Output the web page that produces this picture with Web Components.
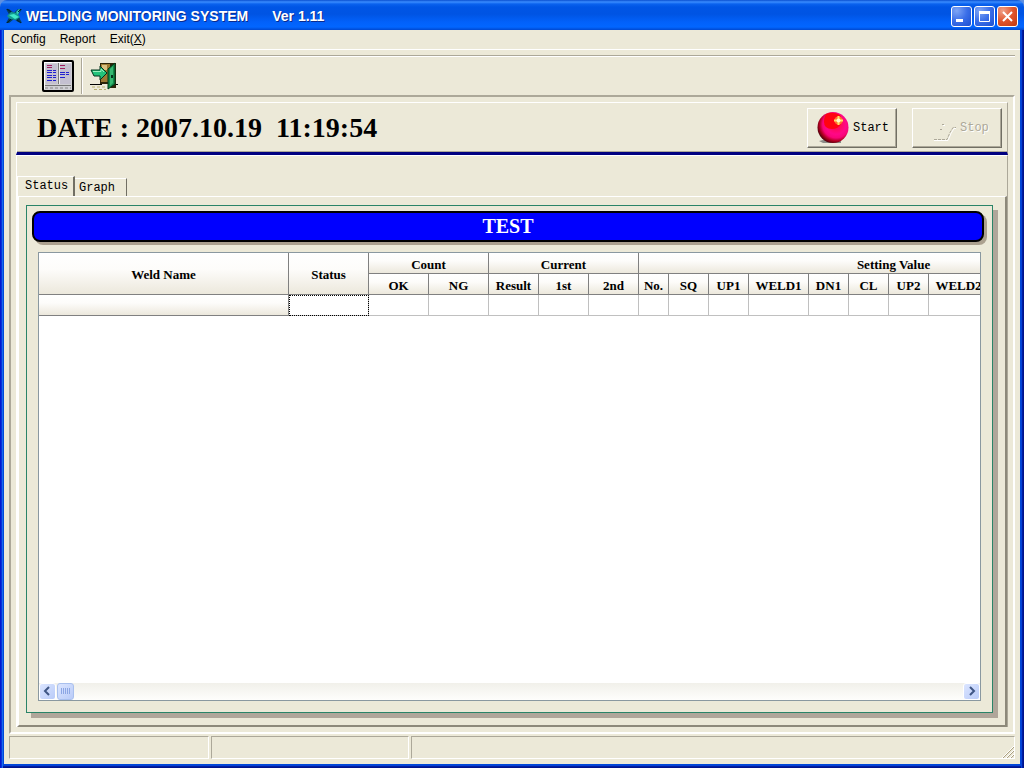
<!DOCTYPE html>
<html lang="en">
<head>
<meta charset="utf-8">
<title>WELDING MONITORING SYSTEM</title>
<style>
  body { margin: 0; background: #5f8fe0; }
</style>
</head>
<body>
<app-window>
  <title-bar slot="title">WELDING MONITORING SYSTEM<span slot="version">Ver 1.11</span></title-bar>
  <menu-bar></menu-bar>
  <tool-bar></tool-bar>
  <main-frame>
    <date-panel>
      <span>DATE : 2007.10.19&nbsp; 11:19:54</span>
      <push-button slot="actions" kind="start">Start</push-button>
      <push-button slot="actions" kind="stop" disabled>Stop</push-button>
    </date-panel>
    <tab-view>
      <line-panel heading="TEST"><weld-grid></weld-grid></line-panel>
    </tab-view>
  </main-frame>
  <status-bar></status-bar>
</app-window>

<script>
const define = (name, html) => {
  customElements.define(name, class extends HTMLElement {
    constructor() {
      super();
      const t = document.createElement('template');
      t.innerHTML = typeof html === 'function' ? html(this) : html;
      this.attachShadow({ mode: 'open' }).append(t.content.cloneNode(true));
    }
  });
};

define('app-window', `
<style>
  :host { display: flex; flex-direction: column; min-height: 100vh; box-sizing: border-box;
    font: 12px/16px "Liberation Sans", Arial, sans-serif; color: #000;
    --face: #ece9d8; --shade: #aca899; --dark: #716f64; }
  .client { flex: 1; display: flex; flex-direction: column; padding: 0 4px 4px; background: #0048d8;
    box-shadow: inset 1px 0 #0019cf, inset -1px 0 #00138c, inset 2px 0 #0831d9, inset -2px 0 #001ea0,
      inset 3px 0 #166aee, inset -3px 0 #0441d8, inset 0 -1px #00138c, inset 0 -2px #001ea0, inset 0 -3px #0441d8; }
  .face { flex: 1; display: flex; flex-direction: column; background: var(--face); }
</style>
<slot name="title"></slot>
<div class="client"><div class="face"><slot></slot></div></div>`);

define('title-bar', `
<style>
  :host { display: flex; align-items: center; height: 30px; box-sizing: border-box; padding: 2px 6px 0 6px;
    border-radius: 7px 7px 0 0; color: #fff; font: bold 14px/18px "Liberation Sans", Arial, sans-serif;
    text-shadow: 1px 1px #0a2a8c;
    background: linear-gradient(#0a4fd0 0, #3a8cff 2px, #0a62ee 4px, #0055e5 7px, #0054e3 14px, #0261fa 22px, #0266ff 27px, #0048d0 30px); }
  .name { margin-left: 4px; white-space: nowrap; }
  .version { margin-left: 24px; flex: 1; }
  .controls { display: flex; gap: 2px; }
  button { width: 21px; height: 21px; padding: 0; border: 1px solid #fff; border-radius: 3px;
    background: radial-gradient(circle at 25% 20%, #7fa5f5, #3a6ee8 50%, #1c4fd0); }
  button.close { background: radial-gradient(circle at 25% 20%, #f0a088, #e0552c 50%, #c03810); }
  svg { display: block; }
</style>
<svg width="16" height="16" viewBox="0 0 16 16" aria-hidden="true">
  <path d="M0 1h3l5 4 4-4h4l-4 6 3 6 1 2-4-1-4-3-5 4H0l4-7z" fill="#05405c"/>
  <path d="M1 8l4-4 6 1 3 4-4 3-6-1z" fill="#129a90"/>
  <path d="M10 4l3-3 1 1-2 5z" fill="#30d0b8"/>
  <path d="M3 7l5-1 5 3-4 2z" fill="#40e8c8"/>
  <path d="M1 1l4 3M15 15l-4-3M1 15l4-4M12 4l3-3" stroke="#021c38"/>
</svg>
<span class="name"><slot></slot></span><span class="version"><slot name="version"></slot></span>
<span class="controls">
  <button aria-label="Minimize"><svg width="19" height="19"><path d="M4 12h7v3H4z" fill="#fff"/></svg></button>
  <button aria-label="Maximize"><svg width="19" height="19"><path d="M4.500 4.500h10v10h-10z" fill="none" stroke="#fff"/><path d="M4 4h11v3H4z" fill="#fff"/></svg></button>
  <button class="close" aria-label="Close"><svg width="19" height="19"><path d="M5 5l9 9M14 5l-9 9" stroke="#fff" stroke-width="2"/></svg></button>
</span>`);

define('menu-bar', `
<style>
  :host { display: flex; gap: 14px; height: 19px; padding-left: 7px; border-bottom: 1px solid #fff; }
  button { border: 0; padding: 0; background: none; font: inherit; line-height: 19px; color: #000; }
</style>
<button>Config</button><button>Report</button><button>Exit(<u>X</u>)</button>`);

define('tool-bar', `
<style>
  :host { display: flex; align-items: center; height: 40px; box-sizing: border-box; margin: 5px 5px 0; padding-left: 33px;
    border-top: 1px solid var(--shade); box-shadow: inset 0 1px #fff; }
  button { border: 0; padding: 0; background: none; }
  svg { display: block; }
  i { width: 1px; height: 36px; margin: 0 7px; background: var(--shade); border-right: 1px solid #fff; }
</style>
<button aria-label="Report"><svg width="32" height="32" viewBox="0 0 32 32">
  <rect x="1" y="1" width="30" height="30" rx="1" fill="#d0d0d4" stroke="#000" stroke-width="2"/>
  <path d="M2.500 29V2.500H29" fill="none" stroke="#fff"/>
  <rect x="4" y="4" width="11" height="20" fill="#c4c0d0"/><rect x="18" y="4" width="11" height="20" fill="#c4c0d0"/>
  <path d="M16.500 3v21" stroke="#777"/><path d="M17.500 3v21" stroke="#eee"/>
  <path d="M5 5.500h5M5 7.500h5M18 5.500h5M18 8.500h5" stroke="#a02060"/>
  <path d="M5 10.500h5M5 12.500h5M5 15.500h5M5 17.500h5M5 20.500h5M18 12.500h5M18 14.500h5M18 17.500h5M11 10.500h3M11 12.500h3M11 15.500h3M11 17.500h3M11 20.500h3M24 12.500h3M24 14.500h3" stroke="#2020d0"/>
  <path d="M3 25.500h26" stroke="#777"/><path d="M3 28h26" stroke="#888" stroke-dasharray="3 2"/>
</svg></button><i></i>
<button aria-label="Exit"><svg width="28" height="30" viewBox="0 0 28 30">
  <path d="M0 23.500h12M24 23.500h4" stroke="#000"/><path d="M2 26h15M4 28.500h12" stroke="#b8b070" stroke-dasharray="3 2"/>
  <path d="M10 2h16v25h-6l-1-4h-9z" fill="#2c2408"/><path d="M11 3h9v18h-9z" fill="#9b7a34"/>
  <path d="M12 4h5v5h-5z" fill="#d8c080"/>
  <path d="M18 8l7-6v21l-7 5z" fill="#138a48" stroke="#033818"/><path d="M20 8l3-3v17l-3 3z" fill="#35b870"/>
  <path d="M21 14h2v3h-2z" fill="#04351b"/>
  <path d="M1 9h9V5l7 7-7 7v-4H4z" fill="#22c27a" stroke="#02341c"/><path d="M3 10.500h8V8l3 3" fill="none" stroke="#96f0bc"/>
</svg></button>`);

define('main-frame', `
<style>
  :host { flex: 1; display: flex; flex-direction: column; margin: 0 5px; padding: 5px;
    border: 2px solid; border-color: var(--shade) #fff #fff var(--shade); }
</style><slot></slot>`);

define('date-panel', `
<style>
  :host { display: flex; align-items: center; height: 53px; box-sizing: border-box; padding: 0 5px 0 20px;
    border: 1px solid; border-color: #fff var(--shade) #000080 #fff; border-bottom-width: 3px;
    box-shadow: inset 0 -1px var(--shade); }
  .date { flex: 1; font: bold 28px/32px "Liberation Serif", "Times New Roman", serif; white-space: nowrap; }
  .actions { display: flex; gap: 15px; }
</style>
<div class="date"><slot></slot></div><div class="actions"><slot name="actions"></slot></div>`);

const art = {
  start: `<svg width="32" height="32" viewBox="0 0 32 32">
    <defs><radialGradient id="b" cx=".6" cy=".4" r=".64"><stop offset="0" stop-color="#ff0838"/><stop offset=".5" stop-color="#ff0888"/><stop offset=".68" stop-color="#f80478"/><stop offset=".84" stop-color="#b00020"/><stop offset="1" stop-color="#480008"/></radialGradient></defs>
    <path d="M2 29l8-2h14v4H6z" fill="#8c8c88"/><circle cx="16" cy="15.500" r="15.500" fill="url(#b)"/>
    <path d="M9 2q7-3 14 1 3 5 1 9-3 5-9 5-8 0-8-7 0-5 2-8z" fill="#ff0410"/>
    <circle cx="21.500" cy="8.500" r="4" fill="#ff7030"/><path d="M21.500 4v9M17 8.500h9" stroke="#ffe060" stroke-width="2"/><circle cx="21.500" cy="8.500" r="2" fill="#fffbd0"/></svg>`,
  stop: `<svg width="32" height="32" viewBox="0 0 32 32" fill="none">
    <path d="M10 28.500h14l3-7 3-5h3M19 13.500h2" stroke="#fff"/><path d="M10 27.500h13l3-7 3-5h3M18 12.500h2M16 17.500h2" stroke="#aca899" stroke-dasharray="3 1"/></svg>`
};
define('push-button', host => {
  const kind = host.getAttribute('kind');
  return `
<style>
  :host { display: block; }
  button { display: flex; align-items: center; gap: 4px; width: 90px; height: 40px; box-sizing: border-box; padding: 0 0 0 9px;
    background: var(--face); border: 1px solid; border-color: #fff var(--dark) var(--dark) #fff;
    box-shadow: inset -1px -1px var(--shade); font: 12px/16px "Liberation Mono", monospace; color: #000; }
  button:disabled { color: #aca899; text-shadow: 1px 1px #fff; padding-left: 11px; }
  svg { display: block; }
</style>
<button ${host.hasAttribute('disabled') ? 'disabled' : ''}>${art[kind]}<slot></slot></button>`;
});

define('tab-view', `
<style>
  :host { flex: 1; display: flex; flex-direction: column; padding-top: 20px;
    border: 1px solid; border-color: #fff var(--shade) #fff #fff; border-bottom: 0; }
  .tabs { display: flex; align-items: flex-end; height: 20px; }
  button { border: 0; border-top: 1px solid #fff; border-right: 1px solid var(--dark); background: var(--face);
    padding: 0; box-sizing: border-box; font: 12px/16px "Liberation Mono", monospace; text-align: left; color: #000;
    width: 52px; height: 18px; padding-left: 4px; }
  button[aria-selected=true] { width: 58px; height: 20px; padding: 0 0 2px 7px; border-left: 1px solid #fff; border-right-width: 2px; }
  .body { flex: 1; display: flex; border: 2px solid; border-color: #fff var(--dark) var(--dark) #fff; border-top-width: 1px;
    border-right-color: #8d897a; border-bottom-color: #8d897a; padding: 8px 12px 12px 7px; }
</style>
<div class="tabs" role="tablist"><button role="tab" aria-selected="true">Status</button><button role="tab" aria-selected="false">Graph</button></div>
<div class="body" role="tabpanel"><slot></slot></div>`);

define('line-panel', host => `
<style>
  :host { flex: 1; min-width: 0; display: flex; flex-direction: column; gap: 10px; padding: 5px 8px 11px 5px;
    border: 1px solid #2a8468; box-shadow: 5px 5px #b0a69a; }
  h1 { margin: 0; height: 31px; box-sizing: border-box; border: 2px solid #000; border-radius: 8px; background: #00f;
    box-shadow: 3px 3px #aca18f; color: #fff; text-align: center; font: bold 20px/27px "Liberation Serif", "Times New Roman", serif; }
  .content { flex: 1; display: flex; min-width: 0; padding: 0 3px 0 6px; }
</style>
<h1>${host.getAttribute('heading')}</h1><div class="content"><slot></slot></div>`);

const cols = [['OK', 60], ['NG', 60], ['Result', 50], ['1st', 50], ['2nd', 50], ['No.', 30], ['SQ', 40], ['UP1', 40],
  ['WELD1', 60], ['DN1', 40], ['CL', 40], ['UP2', 40], ['WELD2', 60], ['', 160]];
define('weld-grid', `
<style>
  :host { flex: 1; min-width: 0; display: flex; flex-direction: column; background: #fff; border: 1px solid #8a98a0; overflow: hidden; }
  .view { flex: 1; overflow: hidden; contain: inline-size; }
  table { width: 1110px; table-layout: fixed; border-collapse: separate; border-spacing: 0;
    font: bold 13px/16px "Liberation Serif", "Times New Roman", serif; }
  th, td { box-sizing: border-box; height: 21px; padding: 0; white-space: nowrap; border-right: 1px solid #808080; border-bottom: 1px solid #808080; }
  th { background: linear-gradient(#fff, #fdfcfa 40%, #ece8dc); }
  thead th { padding-top: 4px; }
  thead th[rowspan] { padding-top: 2px; }
  td { border-color: #c0c0c0; }
  td.focus { outline: 1px dotted #000; outline-offset: -1px; }
  .scroll { display: flex; justify-content: space-between; height: 17px; background: linear-gradient(#f1f0ea, #fefefc); }
  .scroll div { display: flex; gap: 1px; }
  button { width: 17px; height: 17px; box-sizing: border-box; padding: 0; border: 1px solid #fff; border-radius: 3px;
    background: linear-gradient(135deg, #dbe5ff, #b9cbf8); }
  .thumb { border-color: #a9c0ee; }
  svg { display: block; }
</style>
<div class="view"><table>
  <colgroup><col style="width:250px"><col style="width:80px">${cols.map(c => `<col style="width:${c[1]}px">`).join('')}</colgroup>
  <thead>
    <tr><th rowspan="2">Weld Name</th><th rowspan="2">Status</th><th colspan="2">Count</th><th colspan="3">Current</th><th colspan="9">Setting Value</th></tr>
    <tr>${cols.map(c => `<th>${c[0]}</th>`).join('')}</tr>
  </thead>
  <tbody><tr><th></th><td class="focus"></td>${cols.map(() => '<td></td>').join('')}</tr></tbody>
</table></div>
<div class="scroll">
  <div><button aria-label="Scroll left"><svg width="15" height="15"><path d="M9 3L5 7l4 4" fill="none" stroke="#3f5684" stroke-width="2"/></svg></button>
  <button class="thumb" aria-label="Scroll position"><svg width="15" height="15"><path d="M3.500 4v6M5.500 4v6M7.500 4v6M9.500 4v6M11.500 4v6" stroke="#8ca6e4"/></svg></button></div>
  <button aria-label="Scroll right"><svg width="15" height="15"><path d="M6 3l4 4-4 4" fill="none" stroke="#3f5684" stroke-width="2"/></svg></button>
</div>`);

define('status-bar', `
<style>
  :host { display: flex; gap: 2px; padding: 2px 5px 5px; }
  div { box-sizing: border-box; width: 200px; height: 23px; border: 1px solid; border-color: var(--shade) #fff #fff var(--shade); }
  .middle { width: 198px; }
  .rest { flex: 1; display: flex; align-items: flex-end; justify-content: flex-end; }
</style>
<div></div><div class="middle"></div>
<div class="rest"><svg width="12" height="12" viewBox="0 0 12 12"><path d="M0 12L12 0M4 12l8-8M8 12l4-4" stroke="#fff"/><path d="M1 12L12 1M5 12l7-7M9 12l3-3" stroke="#aca080"/></svg></div>`);
</script>
</body>
</html>
